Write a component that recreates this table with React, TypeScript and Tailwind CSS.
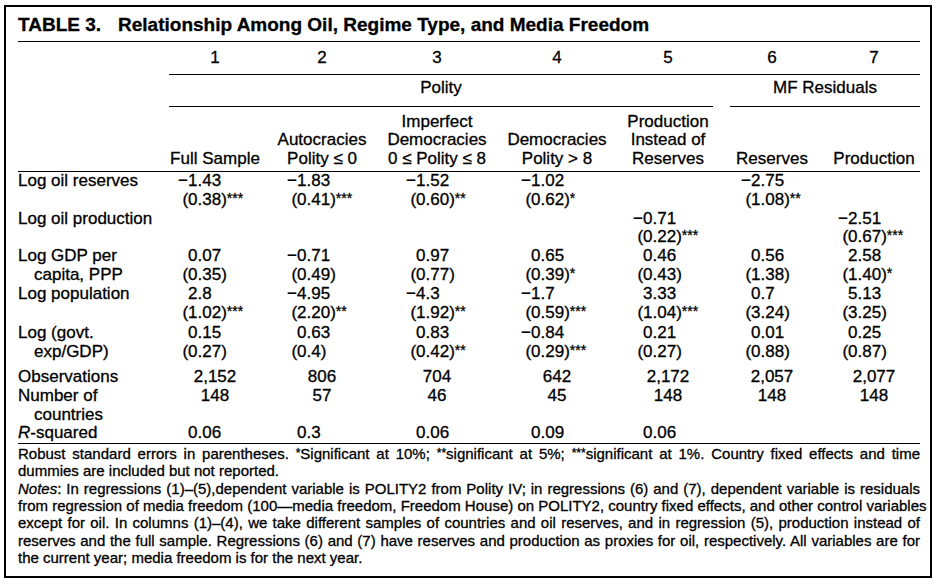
import React from 'react';

const MINUS = '\u2212';

// label column + 7 model columns + a little tail so the rules reach the right edge
const GRID = 'grid grid-cols-[151px_92px_122px_108px_132px_90px_118px_86px_3px]';

// width of the integer part in each column, so the decimal points line up
const DEC = ['w-[28.5px]', 'w-[45.5px]', 'w-[42.5px]', 'w-[49.5px]', 'w-[29.5px]', 'w-[47.5px]', 'w-[26.5px]'];

type Line = {
  label?: React.ReactNode;
  indent?: boolean;
  cells?: string[];
  center?: boolean;
  pad?: string;
};

const lines: Line[] = [
  { label: 'Log oil reserves', cells: ['-1.43', '-1.83', '-1.52', '-1.02', '', '-2.75', ''] },
  { cells: ['(0.38)***', '(0.41)***', '(0.60)**', '(0.62)*', '', '(1.08)**', ''] },
  { label: 'Log oil production', cells: ['', '', '', '', '-0.71', '', '-2.51'] },
  { cells: ['', '', '', '', '(0.22)***', '', '(0.67)***'] },
  { label: 'Log GDP per', cells: ['0.07', '-0.71', '0.97', '0.65', '0.46', '0.56', '2.58'] },
  { label: 'capita, PPP', indent: true, cells: ['(0.35)', '(0.49)', '(0.77)', '(0.39)*', '(0.43)', '(1.38)', '(1.40)*'] },
  { label: 'Log population', cells: ['2.8', '-4.95', '-4.3', '-1.7', '3.33', '0.7', '5.13'] },
  { cells: ['(1.02)***', '(2.20)**', '(1.92)**', '(0.59)***', '(1.04)***', '(3.24)', '(3.25)'] },
  { label: 'Log (govt.', pad: 'pt-[2px]', cells: ['0.15', '0.63', '0.83', '-0.84', '0.21', '0.01', '0.25'] },
  { label: 'exp/GDP)', indent: true, cells: ['(0.27)', '(0.4)', '(0.42)**', '(0.29)***', '(0.27)', '(0.88)', '(0.87)'] },
  { label: 'Observations', pad: 'pt-[6px]', center: true, cells: ['2,152', '806', '704', '642', '2,172', '2,057', '2,077'] },
  { label: 'Number of', center: true, cells: ['148', '57', '46', '45', '148', '148', '148'] },
  { label: 'countries', indent: true },
  {
    label: (
      <>
        <i>R</i>-squared
      </>
    ),
    cells: ['0.06', '0.3', '0.06', '0.09', '0.06', '', ''],
  },
];

const Value = ({ v, col }: { v: string; col: number }) => {
  if (!v) return <div />;
  const parts = v.match(/^([^.*]*)([^*]*)(\**)$/);
  const head = parts ? parts[1] : v;
  const tail = parts ? parts[2] : '';
  const stars = parts ? parts[3] : '';
  return (
    <div className="whitespace-nowrap">
      <span className={`inline-block text-right ${DEC[col]}`}>{head.replace('-', MINUS)}</span>
      {tail}
      {stars && <span className="align-[2px] text-[14px] leading-none">{stars}</span>}
    </div>
  );
};

const Stars = ({ n }: { n: string }) => <span className="align-[2px] text-[12px] leading-none">{n}</span>;

const App: React.FC = () => {
  return (
    <div className="min-h-screen bg-white font-['Liberation_Sans',Arial,sans-serif] text-black [-webkit-text-stroke:0.3px_#000]">
      <div className="ml-[4px] mt-[5px] h-[573px] w-[928px] border-2 border-black pl-[12px] pr-[10px] pt-[6px]">
        <div className="border-b border-black pb-[4px] text-[19px] font-bold leading-[24px]">
          <span>TABLE 3.</span>
          <span className="ml-[17px]">Relationship Among Oil, Regime Type, and Media Freedom</span>
        </div>

        <div className="text-[17px] leading-[18.8px]">
          {/* column numbers */}
          <div className={GRID}>
            <div />
            {['1', '2', '3', '4', '5', '6', '7', ''].map((n, i) => (
              <div key={i} className="border-b border-black pb-[6px] pt-[7px] text-center">
                {n}
              </div>
            ))}
          </div>

          {/* groups */}
          <div className={GRID}>
            <div />
            <div className="col-span-5 border-b border-black pb-[8px] pt-[4px] text-center">Polity</div>
            <div className="col-span-3 ml-[17px] border-b border-black pb-[8px] pt-[4px] text-center">MF Residuals</div>
          </div>

          {/* column heads */}
          <div className={`${GRID} items-end border-b border-black pb-[2px] pt-[6px]`}>
            <div />
            <div className="whitespace-nowrap text-center">Full Sample</div>
            <div className="whitespace-nowrap text-center">
              Autocracies
              <br />
              Polity ≤ 0
            </div>
            <div className="whitespace-nowrap text-center">
              Imperfect
              <br />
              Democracies
              <br />0 ≤ Polity ≤ 8
            </div>
            <div className="whitespace-nowrap text-center">
              Democracies
              <br />
              Polity &gt; 8
            </div>
            <div className="whitespace-nowrap text-center">
              Production
              <br />
              Instead of
              <br />
              Reserves
            </div>
            <div className="whitespace-nowrap text-center">Reserves</div>
            <div className="whitespace-nowrap text-center">Production</div>
          </div>

          {/* body */}
          <div className="border-b border-black">
            {lines.map((line, r) => (
              <div key={r} className={`${GRID} ${line.pad ?? ''}`}>
                <div className={`whitespace-nowrap ${line.indent ? 'pl-[16px]' : ''}`}>{line.label}</div>
                {Array.from({ length: 7 }).map((_, c) => {
                  const v = line.cells ? line.cells[c] : '';
                  if (line.center) {
                    return (
                      <div key={c} className="text-center">
                        {v}
                      </div>
                    );
                  }
                  return <Value key={c} v={v} col={c} />;
                })}
                <div />
              </div>
            ))}
          </div>
        </div>

        {/* notes */}
        <div className="pt-[1px] text-[15px] leading-[17.3px]">
          <div className="whitespace-nowrap text-justify [text-align-last:justify]">
            Robust standard errors in parentheses. <Stars n="*" />Significant at 10%; <Stars n="**" />significant at 5%;{' '}
            <Stars n="***" />significant at 1%. Country fixed effects and time
          </div>
          <div className="whitespace-nowrap">dummies are included but not reported.</div>
          <div className="whitespace-nowrap text-justify [text-align-last:justify]">
            <i>Notes</i>: In regressions (1)–(5),dependent variable is POLITY2 from Polity IV; in regressions (6) and (7),
            dependent variable is residuals
          </div>
          <div className="whitespace-nowrap text-justify [text-align-last:justify]">
            from regression of media freedom (100—media freedom, Freedom House) on POLITY2, country fixed effects, and
            other control variables
          </div>
          <div className="whitespace-nowrap text-justify [text-align-last:justify]">
            except for oil. In columns (1)–(4), we take different samples of countries and oil reserves, and in regression
            (5), production instead of
          </div>
          <div className="whitespace-nowrap text-justify [text-align-last:justify]">
            reserves and the full sample. Regressions (6) and (7) have reserves and production as proxies for oil,
            respectively. All variables are for
          </div>
          <div className="whitespace-nowrap">the current year; media freedom is for the next year.</div>
        </div>
      </div>
    </div>
  );
};

export default App;
